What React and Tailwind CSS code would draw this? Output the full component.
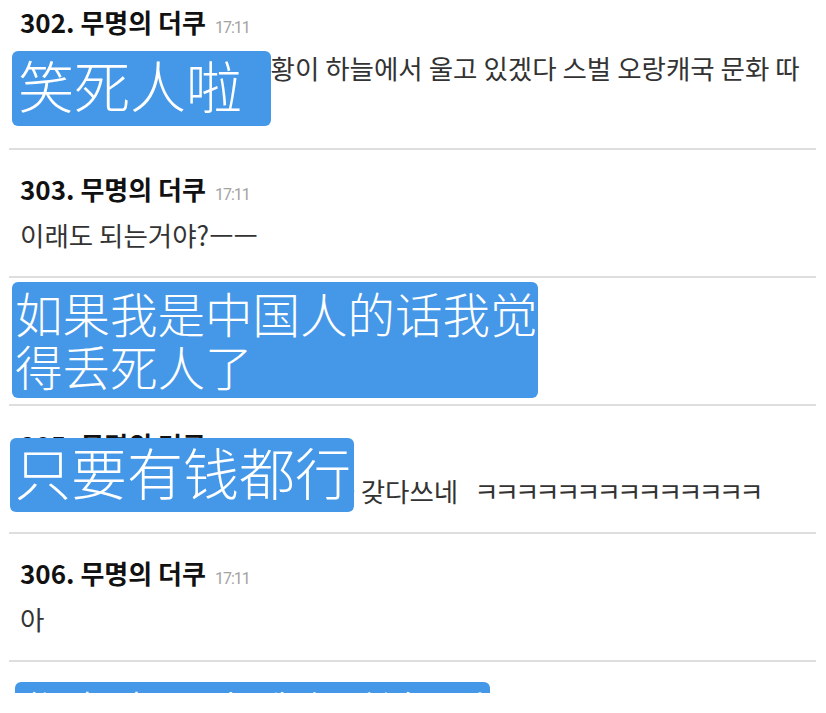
const posts = [
  {
    no: 302,
    body: [
      '이런 거 보면 진짜. 진시황이 하늘에서 울고 있겠다 스벌 오랑캐국 문화 따',
      '라하기 바쁘네',
    ],
  },
  { no: 303, body: ['이래도 되는거야?ㅡㅡ'] },
  { no: 304, body: ['중국인들도 창피하겠다'] },
  { no: 305, body: ['중국은 남의나라 전통문화를 다 갖다쓰네'], laugh: 'ㅋㅋㅋㅋㅋㅋㅋㅋㅋㅋㅋㅋㅋㅋ' },
  { no: 306, body: ['아'] },
  { no: 307, body: ['헐'] },
]

function Post({ post, first }) {
  return (
    <div className={`border-b-2 border-[#dedede] pt-[21px] pl-[11px] ${first ? 'pb-[26px]' : 'pb-[23px]'}`}>
      <div className="h-[36px] flex items-baseline gap-[9px] leading-[36px]">
        <span className="text-[26px] font-bold text-[#111]">{post.no}. 무명의 더쿠</span>
        <span className="font-['Roboto',sans-serif] text-[16px] tracking-[-1px] text-[#a3a3a3]">17:11</span>
      </div>
      <div className="mt-[10px] text-[26.5px] text-[#333] whitespace-nowrap overflow-hidden">
        {post.body.map((line, i) => (
          <div key={i} className="h-[36px] leading-[36px]">
            {line}
            {post.laugh && <span className="ml-[16px] tracking-[-4px]">{post.laugh}</span>}
          </div>
        ))}
      </div>
    </div>
  )
}

function Caption({ className, children }) {
  return (
    <div
      className={`absolute bg-[#4597e8] rounded-[6px] text-white font-light font-['Noto_Sans_CJK_SC',sans-serif] ${className}`}
    >
      {children}
    </div>
  )
}

export default function App() {
  return (
    <div className="w-[826px] h-[713px] bg-white overflow-hidden font-['Noto_Sans_CJK_KR',sans-serif]">
      <div className="relative h-[693px] overflow-hidden">
        <div className="-mt-[17px] ml-[9px] mr-[10px]">
          {posts.map((p, i) => (
            <Post key={p.no} post={p} first={i === 0} />
          ))}
        </div>

        {/* captions over the thread */}
        <Caption className="left-[12px] top-[51px] w-[259px] h-[75px] pl-[6px] text-[56px] leading-[66px]">
          笑死人啦
        </Caption>
        <Caption className="left-[12px] top-[282px] w-[526px] h-[116px] pl-[3px] pt-[4px] text-[47.5px] leading-[53px]">
          如果我是中国人的话我觉
          <br />
          得丢死人了
        </Caption>
        <Caption className="left-[10px] top-[438px] w-[344px] h-[74px] pl-[5px] text-[56px] leading-[66px]">
          只要有钱都行
        </Caption>
        <Caption className="left-[15px] top-[682px] w-[475px] h-[70px] pl-[4px] pt-[2px] text-[47px] leading-[53px]">
          作为中国人我都觉得丢人
        </Caption>
      </div>
    </div>
  )
}
